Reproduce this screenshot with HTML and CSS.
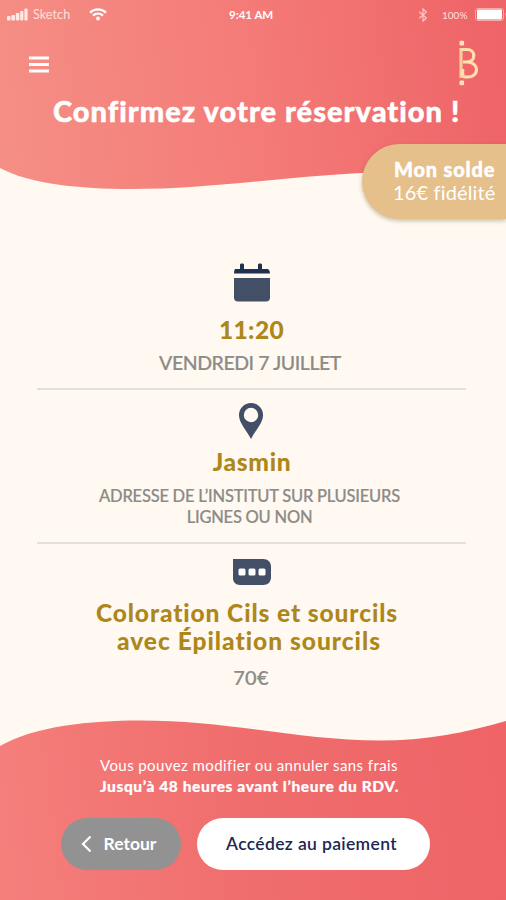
FILE: index.html
```html
<!DOCTYPE html>
<html lang="fr">
  <head>
    <meta charset="UTF-8" />
    <meta name="viewport" content="width=device-width, initial-scale=1.0" />
    <title>Confirmez votre réservation</title>
    <link rel="stylesheet" href="styles.css">
  </head>
  <body>
    <div class="screen">
      <header class="header">
        <svg class="wave" width="506" height="190" viewBox="0 0 506 190">
          <defs>
            <linearGradient id="topGradient" gradientUnits="userSpaceOnUse" x1="0" y1="60" x2="500" y2="0">
              <stop offset="0" stop-color="#f58e85" />
              <stop offset="0.5" stop-color="#f47b77" />
              <stop offset="1" stop-color="#ee6367" />
            </linearGradient>
          </defs>
          <path d="M0 0H506V177C450 171 400 171 362 173C280 177 210 189 130 189C80 189 30 184 0 168Z" fill="url(#topGradient)" />
        </svg>

        <div class="header-content">
          <div class="status-bar">
            <svg class="signal" width="21" height="13" viewBox="0 0 21 13">
              <rect x="0" y="8" width="3.6" height="4.5" rx="1" />
              <rect x="4.4" y="7" width="3.6" height="5.5" rx="1" />
              <rect x="8.8" y="5" width="3.6" height="7.5" rx="1" />
              <rect x="13.2" y="3" width="3.2" height="9.5" rx="1" />
              <rect x="17.4" y="0.5" width="3.2" height="12" rx="1" />
            </svg>
            <span class="carrier">Sketch</span>
            <svg class="wifi" width="18" height="13" viewBox="0 0 18 13">
              <path d="M1 4.6C5.6 0.2 12.4 0.2 17 4.6M4 7.6C7 4.8 11 4.8 14 7.6" />
              <circle cx="9" cy="10.4" r="2" />
            </svg>
            <span class="time">9:41 AM</span>
            <svg class="bluetooth" width="10" height="14" viewBox="0 0 10 14">
              <path d="M1.2 3.8L8.4 10L5 13V1L8.4 4L1.2 10.2" />
            </svg>
            <span class="battery-level">100%</span>
            <svg class="battery" width="31" height="13" viewBox="0 0 31 13">
              <rect class="battery-case" x="0.5" y="0.5" width="28" height="12" rx="2.5" />
              <rect x="2" y="1.5" width="25" height="10" rx="1" />
              <path class="battery-tip" d="M30 4.5C31 5 31 8 30 8.5Z" />
            </svg>
          </div>

          <div class="top-bar">
            <svg class="menu" width="20" height="17" viewBox="0 0 20 17">
              <path d="M0 2H20M0 8.5H20M0 15H20" />
            </svg>
            <svg class="logo" width="22" height="46" viewBox="0 0 22 46">
              <rect x="1.5" y="0.8" width="4.6" height="4.6" rx="1.2" />
              <rect x="1.5" y="40.6" width="4.6" height="4.6" rx="1.2" />
              <path class="logo-stem" d="M3 8V38" />
              <path d="M3 9.5H9C18 9.5 18 22 9 22H5M9 22C21.5 22 21.5 37 10 37H7C4 37 4.5 32 4.8 29" />
            </svg>
          </div>

          <h1>Confirmez votre réservation !</h1>

          <div class="balance">
            <strong>Mon solde</strong>
            <span>16€ fidélité</span>
          </div>
        </div>
      </header>

      <main class="booking">
        <section class="item date">
          <svg class="icon" width="38" height="40" viewBox="0 0 38 40">
            <path d="M2 6H7V1.5C7 0 11 0 11 1.5V6H25V1.5C25 0 29 0 29 1.5V6H35Q37 7 37 10.5H1Q1 7 2 6Z" fill="#1f3150" />
            <path d="M1 15H37V34.5Q37 38.5 33 38.5H5Q1 38.5 1 34.5Z" />
          </svg>
          <h2>11:20</h2>
          <p>VENDREDI 7 JUILLET</p>
        </section>

        <section class="item place">
          <svg class="icon" width="26" height="38" viewBox="0 0 26 38">
            <path fill-rule="evenodd" d="M13 1A12 12 0 0 1 25 13.5C25 21 17 29 13 37C9 29 1 21 1 13.5A12 12 0 0 1 13 1ZM13 5.8A7.2 7.2 0 1 0 13 20.2A7.2 7.2 0 1 0 13 5.8Z" />
          </svg>
          <h2>Jasmin</h2>
          <p>ADRESSE DE L’INSTITUT SUR PLUSIEURS<br>LIGNES OU NON</p>
        </section>

        <section class="item service">
          <svg class="icon" width="40" height="28" viewBox="0 0 40 28">
            <path d="M1 1H31C36 1 39 4 39 9V19C39 24 36 27 31 27H8C3.5 27 1 24 1 20Z" />
            <rect class="dot" x="6.5" y="10.5" width="7" height="7" rx="1.5" />
            <rect class="dot" x="16.5" y="10.5" width="7" height="7" rx="1.5" />
            <rect class="dot" x="26.5" y="10.5" width="7" height="7" rx="1.5" />
          </svg>
          <h2>Coloration Cils et sourcils<br><span class="second-line">avec Épilation sourcils</span></h2>
          <p>70€</p>
        </section>
      </main>

      <footer class="footer">
        <svg class="wave" width="506" height="181" viewBox="0 0 506 181">
          <defs>
            <linearGradient id="bottomGradient" gradientUnits="userSpaceOnUse" x1="0" y1="130" x2="500" y2="70">
              <stop offset="0" stop-color="#f47f7b" />
              <stop offset="0.5" stop-color="#f06d6d" />
              <stop offset="1" stop-color="#ee6467" />
            </linearGradient>
          </defs>
          <path d="M0 27C35 7 90 1.5 140 1.5C230 1.5 300 21.5 380 21.5C425 21.5 465 14 506 2V181H0Z" fill="url(#bottomGradient)" />
        </svg>

        <div class="footer-content">
          <p class="notice">Vous pouvez modifier ou annuler sans frais</p>
          <p class="notice deadline">Jusqu’à 48 heures avant l’heure du RDV.</p>
          <div class="buttons">
            <button class="back">
              <svg width="11" height="18" viewBox="0 0 11 18">
                <path d="M9.5 1.5L2 9L9.5 16.5" />
              </svg>
              <span>Retour</span>
            </button>
            <button class="pay">Accédez au paiement</button>
          </div>
        </div>
      </footer>
    </div>
  </body>
</html>
```
FILE: styles.css
```css
* {
  box-sizing: border-box;
}

body {
  margin: 0;
  font-family: Lato, "Open Sans", sans-serif;
  background-color: #fff9f1;
}

h1,
h2,
p {
  margin: 0;
  white-space: nowrap;
}

.screen {
  display: flex;
  flex-direction: column;
  width: 506px;
  height: 900px;
  overflow: hidden;
}

/* Wave and content share the same grid cell */
.header,
.footer {
  display: grid;
  flex: none;
}

.header > *,
.footer > * {
  grid-area: 1 / 1;
}

.wave {
  display: block;
}

.header {
  height: 226px;
}

.header-content {
  display: flex;
  flex-direction: column;
  color: white;
}

.status-bar {
  display: flex;
  align-items: center;
  height: 29px;
  padding-left: 7px;
  fill: white;
  white-space: nowrap;
}

.status-bar svg {
  flex: none;
}

.signal {
  fill: #ffe9e4;
}

.carrier {
  width: 56px;
  margin-left: 5px;
  font-size: 12.5px;
  letter-spacing: 0.1px;
  color: #ffe0da;
}

.wifi path {
  fill: none;
  stroke: white;
  stroke-width: 2.2;
}

.time {
  width: 189px;
  margin-left: 122px;
  font-size: 11.5px;
  font-weight: 700;
}

.bluetooth {
  fill: none;
  stroke: #fbc9c4;
  stroke-width: 1.2;
}

.battery-level {
  width: 33px;
  margin-left: 14px;
  font-size: 10px;
  color: #ffe0da;
}

.battery-case {
  fill: none;
  stroke: #f9a9a6;
}

.battery-tip {
  fill: #f9a9a6;
}

.top-bar {
  display: flex;
  justify-content: space-between;
  height: 67px;
  padding: 11px 26px 0 29px;
}

.menu {
  margin-top: 16px;
  stroke: white;
  stroke-width: 3;
}

.logo {
  fill: #fee3b9;
}

.logo path {
  fill: none;
  stroke: #fee0b0;
  stroke-width: 3.2;
}

.logo .logo-stem {
  stroke: #f8cc9c;
}

h1 {
  height: 34px;
  padding-left: 53px;
  font-size: 29px;
  line-height: 29px;
  font-weight: 900;
  letter-spacing: 1.02px;
  -webkit-text-stroke: 0.5px white;
}

.balance {
  display: flex;
  flex-direction: column;
  align-self: flex-end;
  width: 144px;
  height: 75px;
  margin-top: 14px;
  padding: 14px 0 0 32px;
  border-radius: 38px 0 0 38px;
  background-color: #e6c08a;
  box-shadow: 0 2px 4px rgba(100, 80, 40, 0.35);
  font-size: 20px;
  line-height: 23px;
  white-space: nowrap;
}

.balance strong {
  font-weight: 900;
  letter-spacing: 0.8px;
  -webkit-text-stroke: 0.4px white;
}

.balance span {
  margin-left: -1px;
  letter-spacing: 0.15px;
}

.booking {
  flex: 1;
  padding: 0 40px 0 37px;
}

.item {
  display: flex;
  flex-direction: column;
  align-items: center;
  text-align: center;
  color: #8c8b87;
}

.item + .item {
  border-top: 2px solid #e5e0da;
}

.icon {
  flex: none;
  fill: #424f66;
}

.dot {
  fill: white;
}

h2 {
  font-size: 24.5px;
  line-height: 28px;
  font-weight: 900;
  color: #ae871b;
}

.date {
  height: 162px;
  padding-top: 37px;
}

.date h2 {
  margin-top: 13px;
  letter-spacing: 0.4px;
}

.date p {
  margin-top: 7px;
  margin-right: 3px;
  font-size: 19.5px;
  line-height: 24px;
  font-weight: 500;
  letter-spacing: -0.45px;
  -webkit-text-stroke: 0.2px #8c8b87;
}

.place {
  height: 154px;
  padding: 12px 2px 0 0;
}

.place h2 {
  margin-top: 8px;
  margin-left: 3px;
  letter-spacing: 0.7px;
}

.place p {
  margin-top: 10px;
  margin-right: 2px;
  font-size: 16.5px;
  line-height: 21px;
  font-weight: 500;
  letter-spacing: -0.23px;
  -webkit-text-stroke: 0.2px #8c8b87;
}

.service {
  padding-top: 14px;
}

.service h2 {
  margin-top: 13px;
  margin-right: 9px;
  letter-spacing: 0.9px;
}

.second-line {
  padding-left: 4px;
  letter-spacing: 1px;
}

.service p {
  margin-top: 10px;
  margin-right: 1px;
  font-size: 20px;
  line-height: 24px;
  font-weight: 500;
  letter-spacing: 0.3px;
  -webkit-text-stroke: 0.2px #8c8b87;
}

.footer {
  height: 181px;
}

.footer-content {
  display: flex;
  flex-direction: column;
  padding-top: 36px;
}

.notice {
  padding-left: 100px;
  font-size: 15px;
  line-height: 21px;
  letter-spacing: 0.41px;
  color: white;
}

.deadline {
  font-size: 15.5px;
  font-weight: 900;
  letter-spacing: 0.6px;
  -webkit-text-stroke: 0.2px white;
}

.buttons {
  display: flex;
  gap: 16px;
  margin-top: 21px;
  padding-left: 61px;
}

button {
  display: flex;
  align-items: center;
  justify-content: center;
  height: 52px;
  padding: 0 0 2px;
  border: none;
  border-radius: 26px;
  font-family: inherit;
  font-size: 17.5px;
  cursor: pointer;
  white-space: nowrap;
}

.back {
  gap: 12px;
  width: 120px;
  padding-right: 5px;
  background-color: #929292;
  color: white;
  font-weight: 700;
}

.back svg {
  margin-top: 2px;
  fill: none;
  stroke: white;
  stroke-width: 2.2;
}

.pay {
  width: 233px;
  padding-right: 4px;
  background-color: white;
  color: #1c2850;
  font-weight: 600;
  letter-spacing: 0.35px;
}
```
